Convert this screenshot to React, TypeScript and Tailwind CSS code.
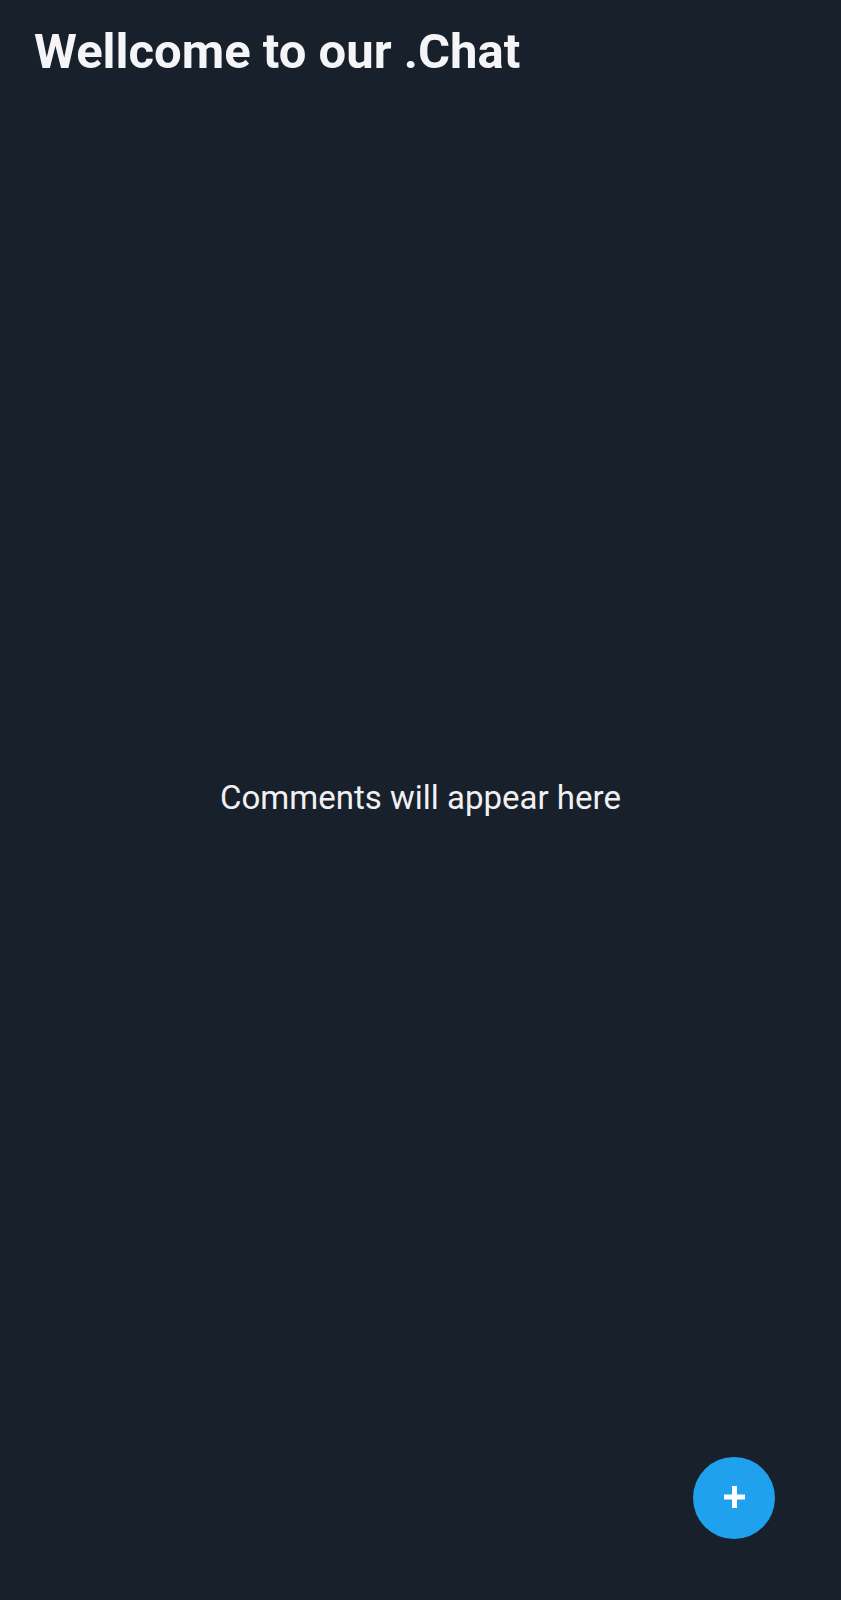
const App = () => {
    return (
        <div className="relative min-h-[1600px] w-full bg-[#18202b] flex flex-col" style={{fontFamily: "Roboto, 'Liberation Sans', sans-serif"}}>
            <h1 className="px-[34px] pt-[20px] text-[49px] font-bold leading-[64px] text-[#f5f5f7]">Wellcome to our .Chat</h1>
            <div className="flex-1 flex items-center justify-center pb-[88px]">
                <p className="text-[33px] text-[#f0f0f2]">Comments will appear here</p>
            </div>
            <button className="absolute left-[693px] top-[1457px] w-[82px] h-[82px] rounded-full bg-[#1fa1ed] flex items-center justify-center">
                <svg width="21" height="22" viewBox="0 0 21 22" className="-mt-[3px]">
                    <path d="M10.5 0v22M0 11h21" stroke="#ffffff" strokeWidth="5" />
                </svg>
            </button>
        </div>
    )
}

export default App
